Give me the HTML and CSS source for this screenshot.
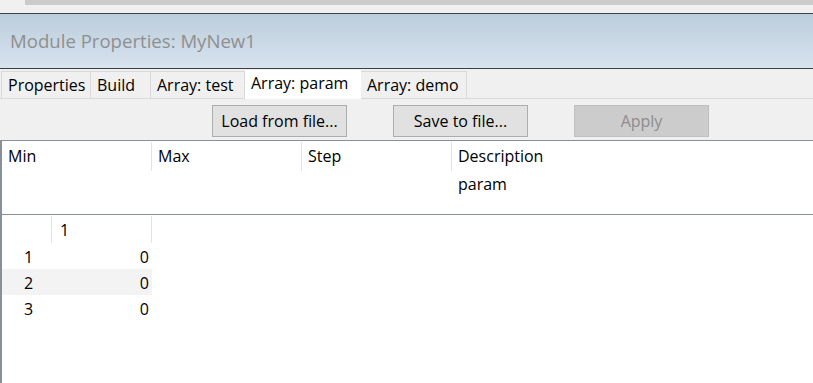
FILE: index.html
```html
<!DOCTYPE html>
<html>
<head>
<meta charset="utf-8">
<link rel="stylesheet" href="styles.css">
</head>
<body>
<div class="window">
  <div class="topstrip"><div class="topgrey"></div></div>
  <div class="title">Module Properties: MyNew1</div>
  <div class="tabbar">
    <div class="tab t1">Properties</div>
    <div class="tab t2">Build</div>
    <div class="tab t3">Array: test</div>
    <div class="tab t4 active">Array: param</div>
    <div class="tab t5">Array: demo</div>
  </div>
  <div class="btnrow">
    <button class="btn">Load from file...</button>
    <button class="btn">Save to file...</button>
    <button class="btn disabled">Apply</button>
  </div>
  <div class="content">
    <div class="meta">
      <div class="metahead">
        <div class="mcell">Min</div>
        <div class="mcell">Max</div>
        <div class="mcell">Step</div>
        <div class="mcell last">Description</div>
      </div>
      <div class="metarow">
        <div class="mval"></div>
        <div class="mval"></div>
        <div class="mval"></div>
        <div class="mval">param</div>
      </div>
    </div>
    <div class="grid">
      <div class="ghead">
        <div class="corner"></div>
        <div class="colhead">1</div>
      </div>
      <div class="grow"><div class="rh">1</div><div class="gv">0</div></div>
      <div class="grow alt"><div class="rh">2</div><div class="gv">0</div></div>
      <div class="grow"><div class="rh">3</div><div class="gv">0</div></div>
    </div>
  </div>
</div>
</body>
</html>
```

FILE: styles.css
```css
html, body {
  margin: 0;
  padding: 0;
}
body {
  width: 813px;
  height: 383px;
  overflow: hidden;
  background: #f0f0f0;
  font-family: "Open Sans", "Noto Sans", sans-serif;
  font-size: 16px;
  color: #000;
}
.window {
  display: flex;
  flex-direction: column;
  height: 383px;
}
.topstrip {
  height: 13px;
  background: #f0f0f0;
}
.topgrey {
  margin-left: 25px;
  height: 5px;
  background: #cbcbcb;
}
.title {
  height: 54px;
  border-top: 1px solid #3f3f3f;
  border-bottom: 1px solid #3f3f3f;
  background: linear-gradient(to bottom, #bccddb, #d7e3ef);
  color: #8f8f8f;
  font-size: 18.6px;
  line-height: 54px;
  padding-left: 10px;
  box-sizing: content-box;
}
.tabbar {
  display: flex;
  align-items: flex-end;
  height: 29px;
  border-bottom: 1px solid #d9d9d9;
  padding-left: 1px;
}
.tab {
  height: 26px;
  line-height: 27px;
  border: 1px solid #d9d9d9;
  border-bottom: none;
  border-left: none;
  padding: 0 6px;
  box-sizing: content-box;
  white-space: nowrap;
}
.t1 { border-left: 1px solid #d9d9d9; width: 76px; padding-left: 6px; }
.t2 { width: 47px; }
.t3 { width: 81px; }
.t5 { width: 93px; }
.tab.active {
  width: 104px;
  height: 29px;
  line-height: 26px;
  margin-bottom: -1px;
  background: #ffffff;
  border: none;
  padding: 0 6px 0 6px;
}
.btnrow {
  display: flex;
  height: 35px;
  padding: 6px 0 0 212px;
  gap: 46px;
}
.btn {
  width: 135px;
  height: 32px;
  margin: 0;
  padding: 0;
  border: 1px solid #adadad;
  background: #e1e1e1;
  font-family: inherit;
  font-size: 16px;
  color: #000;
}
.btn.disabled {
  background: #cccccc;
  border-color: #bfbfbf;
  color: #8d8d8d;
}
.content {
  flex: 1;
  background: #ffffff;
  border-top: 1px solid #8a9099;
  border-left: 2px solid #8a9099;
}
.meta {
  height: 73px;
  border-bottom: 1px solid #8a9099;
}
.metahead {
  display: flex;
  padding-top: 1px;
  height: 29px;
}
.mcell {
  width: 143px;
  padding-left: 6px;
  border-right: 1px solid #e3e3e3;
  line-height: 29px;
}
.mcell.last {
  border-right: none;
}
.metarow {
  display: flex;
  height: 27px;
}
.mval {
  width: 144px;
  padding-left: 6px;
  line-height: 27px;
}
.grid {
  width: 150px;
}
.ghead {
  display: flex;
  margin-top: 1px;
  height: 27px;
}
.corner {
  width: 49px;
  border-right: 1px solid #e3e3e3;
}
.colhead {
  width: 91px;
  padding-left: 8px;
  border-right: 1px solid #e3e3e3;
  line-height: 29px;
}
.grow {
  display: flex;
  height: 26px;
  line-height: 28px;
}
.grow.alt {
  background: #f3f3f3;
}
.rh {
  width: 50px;
  text-align: center;
  padding-left: 3px;
  box-sizing: border-box;
}
.gv {
  width: 100px;
  text-align: right;
  padding-right: 3px;
  box-sizing: border-box;
}
```
